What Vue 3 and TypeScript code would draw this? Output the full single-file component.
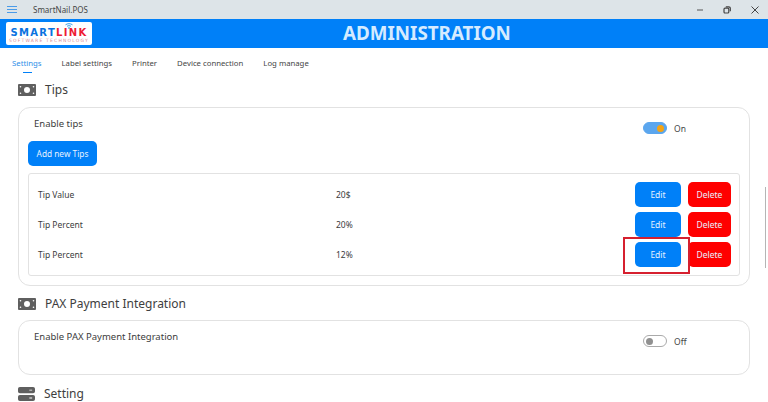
<template>
  <div class="window">
    <div class="titlebar">
      <div class="menu-icon"><span></span><span></span><span></span></div>
      <span class="app-name">SmartNail.POS</span>
      <div class="win-controls">
        <svg width="10" height="10" viewBox="0 0 10 10"><path d="M2 5h6" stroke="#555" stroke-width="1" /></svg>
        <svg width="10" height="10" viewBox="0 0 10 10" fill="none" stroke="#444" stroke-width="1.2"><rect x="2" y="3.200" width="4.800" height="4.800" rx="1" /><path d="M3.800 1.800h3a1.500 1.500 0 0 1 1.500 1.500v3" /></svg>
        <svg width="10" height="10" viewBox="0 0 10 10"><path d="M1.500 1.500l7 7M8.500 1.500l-7 7" stroke="#444" stroke-width="1" /></svg>
      </div>
    </div>

    <header class="header">
      <div class="logo">
        <svg class="wifi" width="8" height="6" viewBox="0 0 8 6" fill="none" stroke="#3aa0e8" stroke-width="1"><path d="M0.500 1.800c2-1.500 5-1.500 7 0M2 3.300c1.200-.8 2.800-.8 4 0" /><circle cx="4" cy="5" r=".5" /></svg>
        <div class="logo-main"><span class="blue">SMART</span><span class="red">LINK</span></div>
        <div class="logo-sub">SOFTWARE TECHNOLOGY</div>
      </div>
      <h1>ADMINISTRATION</h1>
    </header>

    <nav class="tabs">
      <a v-for="(tab, i) in tabs" :key="tab" class="tab" :class="{ active: i === 0 }">{{ tab }}</a>
    </nav>

    <main class="content">
      <section>
        <h2 class="section-title">
          <svg class="bill" width="18" height="12" viewBox="0 0 18 12"><path fill-rule="evenodd" fill="#5f5f5f" :d="billPath" /></svg>
          <span>Tips</span>
        </h2>
        <div class="card tips-card">
          <div class="card-row">
            <span class="card-label">Enable tips</span>
            <div class="toggle-wrap">
              <span class="toggle on"><i></i></span>
              <span class="toggle-text">On</span>
            </div>
          </div>
          <button class="btn add">Add new Tips</button>
          <div class="tip-list">
            <div v-for="(tip, i) in tips" :key="i" class="tip-row">
              <span class="tip-name">{{ tip.name }}</span>
              <span class="tip-value">{{ tip.value }}</span>
              <button class="btn edit" :class="{ marked: i === 2 }">Edit</button>
              <button class="btn delete">Delete</button>
            </div>
          </div>
        </div>
      </section>

      <section class="pax">
        <h2 class="section-title">
          <svg class="bill" width="18" height="12" viewBox="0 0 18 12"><path fill-rule="evenodd" fill="#5f5f5f" :d="billPath" /></svg>
          <span>PAX Payment Integration</span>
        </h2>
        <div class="card pax-card">
          <div class="card-row">
            <span class="card-label">Enable PAX Payment Integration</span>
            <div class="toggle-wrap">
              <span class="toggle"><i></i></span>
              <span class="toggle-text">Off</span>
            </div>
          </div>
        </div>
      </section>

      <section class="setting">
        <h2 class="section-title">
          <svg class="bill" width="17" height="14" viewBox="0 0 18 16" preserveAspectRatio="none"><path fill-rule="evenodd" fill="#5f5f5f" d="M2 0h14a2 2 0 0 1 2 2v3a2 2 0 0 1-2 2H2a2 2 0 0 1-2-2V2a2 2 0 0 1 2-2zM12 3v1h3V3zM2 9h14a2 2 0 0 1 2 2v3a2 2 0 0 1-2 2H2a2 2 0 0 1-2-2v-3a2 2 0 0 1 2-2zM12 12v1h3v-1z" /></svg>
          <span>Setting</span>
        </h2>
      </section>
    </main>

    <div class="scroll-thumb"></div>
  </div>
</template>

<script setup lang="ts">
interface Tip {
  name: string;
  value: string;
}

const tabs: string[] = ['Settings', 'Label settings', 'Printer', 'Device connection', 'Log manage'];

const tips: Tip[] = [
  { name: 'Tip Value', value: '20$' },
  { name: 'Tip Percent', value: '20%' },
  { name: 'Tip Percent', value: '12%' },
];

// banknote icon, used by two section titles
const billPath =
  'M1 0h16a1 1 0 0 1 1 1v10a1 1 0 0 1-1 1H1a1 1 0 0 1-1-1V1a1 1 0 0 1 1-1zM9 3a3 3 0 1 0 0 6 3 3 0 0 0 0-6zM2.500 2a.8.8 0 1 0 0 1.600.8.8 0 0 0 0-1.600zM15.500 2a.8.8 0 1 0 0 1.600.8.8 0 0 0 0-1.600zM2.500 8.400a.8.8 0 1 0 0 1.600.8.8 0 0 0 0-1.600zM15.500 8.400a.8.8 0 1 0 0 1.600.8.8 0 0 0 0-1.600z';
</script>

<style>
html,
body {
  margin: 0;
  background: #fff;
  overflow: hidden;
}
</style>

<style scoped>
.window {
  position: relative;
  width: 768px;
  height: 402px;
  overflow: hidden;
  background: #fff;
  font-family: "Noto Sans", "Open Sans", sans-serif;
  color: #3c3c3c;
}

/* title bar */
.titlebar {
  display: flex;
  align-items: center;
  height: 19px;
  background: #dde4e8;
  padding-left: 7px;
}
.menu-icon {
  display: flex;
  flex-direction: column;
  gap: 2px;
  width: 10px;
}
.menu-icon span {
  height: 1px;
  background: #4a9be8;
}
.app-name {
  margin-left: 16px;
  font-size: 8px;
  color: #444;
}
.win-controls {
  display: flex;
  gap: 17.500px;
  margin-left: auto;
  padding-right: 8.500px;
}

/* header */
.header {
  display: flex;
  align-items: center;
  height: 29px;
  padding: 0 6px;
  background: #0080f8;
}
.header h1 {
  flex: 1;
  margin: 0;
  text-align: center;
  font-size: 18.800px;
  line-height: 29px;
  font-weight: 700;
  color: #d5ebff;
}
.logo {
  position: relative;
  flex: none;
  width: 86px;
  height: 23px;
  box-sizing: border-box;
  padding-top: 5px;
  background: #fff;
  border-radius: 2px;
  text-align: center;
  font-family: "DejaVu Sans", sans-serif;
  overflow: hidden;
}
.wifi {
  position: absolute;
  left: 59px;
  top: 1px;
}
.logo-main {
  font-size: 10px;
  line-height: 11px;
  font-weight: 700;
  letter-spacing: 1.300px;
}
.logo-main .blue {
  color: #0a72e0;
}
.logo-main .red {
  color: #ee1c34;
}
.logo-sub {
  font-size: 4.500px;
  line-height: 5px;
  letter-spacing: 1.200px;
  color: #d88c96;
  white-space: nowrap;
}

/* tabs */
.tabs {
  display: flex;
  gap: 20px;
  height: 26px;
  padding-left: 12px;
}
.tab {
  position: relative;
  font-size: 7.750px;
  line-height: 30px;
  color: #454545;
}
.tab.active {
  color: #2f8fe8;
}
.tab.active::after {
  content: "";
  position: absolute;
  left: 11px;
  bottom: 1px;
  width: 9px;
  height: 1.500px;
  background: #0080f8;
}

/* sections */
.content {
  padding: 4px 18px 0;
}
.section-title {
  display: flex;
  align-items: center;
  gap: 9px;
  height: 23px;
  margin: 0;
  font-size: 12px;
  font-weight: 400;
  color: #3e3e3e;
}
.bill {
  flex: none;
}
.card {
  box-sizing: border-box;
  width: 732px;
  border: 1px solid #e2e2e2;
  border-radius: 12px;
  background: #fff;
}
.tips-card {
  height: 179px;
  margin-top: 6px;
  padding: 9px 9px 0;
}
.pax {
  margin-top: 6px;
}
.pax-card {
  height: 55px;
  margin-top: 5px;
  padding: 9px 9px 0;
}
.setting {
  margin-top: 7px;
}
.card-row {
  display: flex;
  justify-content: space-between;
  padding-left: 6px;
  height: 24px;
}
.card-label {
  font-size: 9.500px;
  line-height: 14px;
  color: #3c3c3c;
}
.toggle-wrap {
  display: flex;
  align-items: center;
  gap: 7px;
  width: 97px;
  height: 22px;
}
.toggle {
  box-sizing: border-box;
  display: flex;
  align-items: center;
  width: 24px;
  height: 12px;
  border: 1px solid #aaa;
  border-radius: 6px;
  padding: 0 2px;
}
.toggle i {
  width: 7px;
  height: 7px;
  border-radius: 50%;
  background: #909090;
}
.toggle.on {
  justify-content: flex-end;
  background: #5ba6ee;
  border-color: #5ba6ee;
}
.toggle.on i {
  background: #f5a313;
}
.toggle-text {
  font-size: 8.500px;
  color: #444;
}

/* buttons */
.btn {
  box-sizing: border-box;
  border: 0;
  padding: 0;
  font-family: inherit;
  font-size: 8.500px;
  color: #e6f2ff;
  border-radius: 5px;
}
.add {
  display: block;
  width: 69px;
  height: 25px;
  background: #0080f8;
  font-size: 8.300px;
}
.tip-list {
  box-sizing: border-box;
  height: 103px;
  margin-top: 7px;
  padding: 8px 8px 0 9px;
  border: 1px solid #e2e2e2;
  border-radius: 3px;
  display: flex;
  flex-direction: column;
  gap: 5px;
}
.tip-row {
  display: flex;
  align-items: center;
  height: 25px;
  font-size: 8.500px;
}
.tip-name {
  width: 298px;
}
.tip-value {
  flex: 1;
}
.edit {
  position: relative;
  width: 46px;
  height: 25px;
  margin-right: 7px;
  background: #0080f8;
}
.delete {
  width: 43px;
  height: 25px;
  background: #ff0000;
}

/* red annotation drawn over the third Edit button */
.marked::after {
  content: "";
  position: absolute;
  left: -12px;
  top: -5px;
  width: 67px;
  height: 37px;
  box-sizing: border-box;
  border: 2px solid #d6202f;
}

.scroll-thumb {
  position: absolute;
  right: 2px;
  top: 187px;
  width: 1px;
  height: 81px;
  background: #b5b5b5;
}
</style>
